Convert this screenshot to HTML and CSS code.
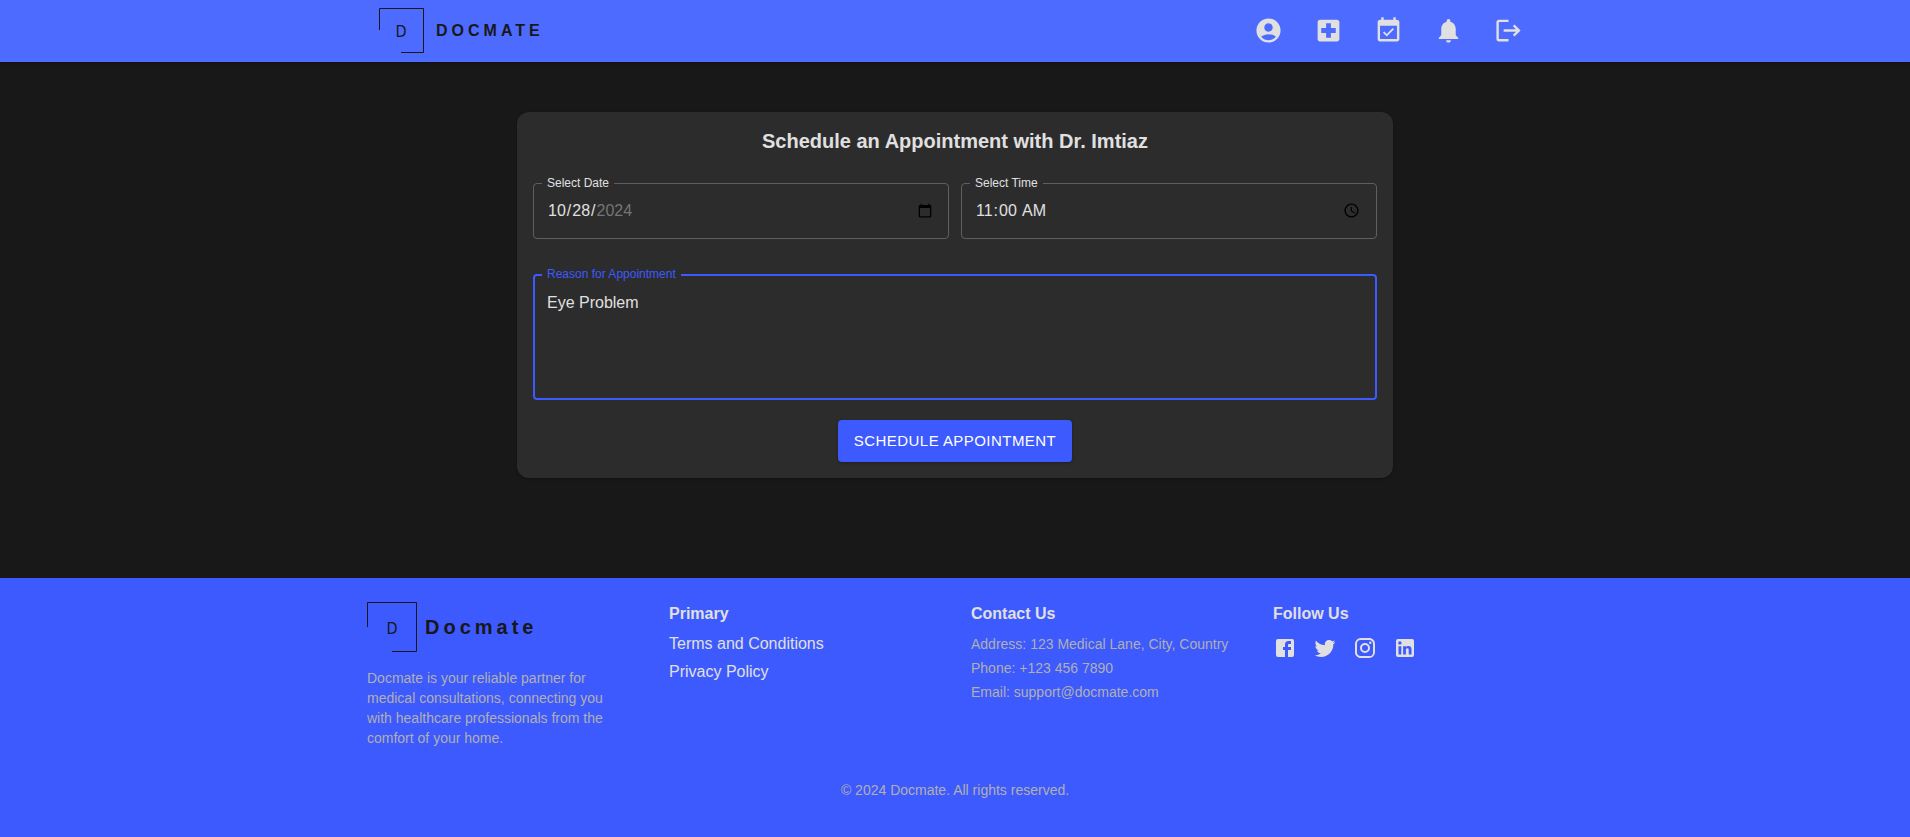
FILE: index.html
```html
<!DOCTYPE html>
<html lang="en">
<head>
<meta charset="utf-8">
<meta name="viewport" content="width=device-width, initial-scale=1">
<title>Docmate – Schedule an Appointment</title>
<link rel="stylesheet" href="styles.css">
</head>
<body>
<header class="topbar">
  <div class="container topbar-inner">
    <a class="brand" href="#home">
      <svg class="brand-mark" viewBox="0 0 45 45" aria-hidden="true"><path d="M.5 22V.5H44.5V44.5H22" fill="none" stroke="currentColor"/><text class="brand-letter" x="22" y="29" text-anchor="middle">D</text></svg>
      <span class="brand-name">DOCMATE</span>
    </a>
    <nav class="actions" aria-label="Main">
      <a class="action" href="#profile" aria-label="Profile"><svg viewBox="0 0 24 24"><path d="M12 2C6.48 2 2 6.48 2 12s4.480 10 10 10 10-4.480 10-10S17.520 2 12 2zm0 4c1.930 0 3.500 1.570 3.500 3.500S13.930 13 12 13s-3.500-1.570-3.500-3.500S10.070 6 12 6zm0 14c-2.030 0-4.430-.820-6.140-2.880C7.550 15.800 9.680 15 12 15s4.450.800 6.140 2.120C16.430 19.180 14.030 20 12 20z"/></svg></a>
      <a class="action" href="#doctors" aria-label="Doctors"><svg viewBox="0 0 24 24"><path d="M19 3H5c-1.100 0-1.990.900-1.990 2L3 19c0 1.100.900 2 2 2h14c1.100 0 2-.900 2-2V5c0-1.100-.900-2-2-2zm-1 11h-4v4h-4v-4H6v-4h4V6h4v4h4v4z"/></svg></a>
      <a class="action" href="#appointments" aria-label="Appointments"><svg viewBox="0 0 24 24"><path d="M16.530 11.060L15.470 10l-4.880 4.880-2.120-2.120-1.060 1.060L10.590 17l5.940-5.940zM19 3h-1V1h-2v2H8V1H6v2H5c-1.110 0-1.990.900-1.990 2L3 19c0 1.100.890 2 2 2h14c1.100 0 2-.900 2-2V5c0-1.100-.900-2-2-2zm0 16H5V8h14v11z"/></svg></a>
      <a class="action" href="#notifications" aria-label="Notifications"><svg viewBox="0 0 24 24"><path d="M12 22c1.100 0 2-.900 2-2h-4c0 1.100.890 2 2 2zm6-6v-5c0-3.070-1.640-5.640-4.500-6.320V4c0-.830-.670-1.500-1.500-1.500s-1.500.670-1.500 1.500v.680C7.630 5.360 6 7.920 6 11v5l-2 2v1h16v-1l-2-2z"/></svg></a>
      <a class="action" href="#logout" aria-label="Log out"><svg viewBox="0 0 24 24"><path d="M17 7l-1.410 1.410L18.170 11H8v2h10.170l-2.580 2.580L17 17l5-5zM4 5h8V3H4c-1.100 0-2 .900-2 2v14c0 1.100.900 2 2 2h8v-2H4V5z"/></svg></a>
    </nav>
  </div>
</header>

<main class="main">
  <form class="card">
    <h1 class="card-title">Schedule an Appointment with Dr. Imtiaz</h1>
    <div class="field-row">
      <div class="field">
        <label class="field-label" for="date">Select Date</label>
        <input class="field-input date-input" id="date" type="date" value="2024-10-28">
      </div>
      <div class="field">
        <label class="field-label" for="time">Select Time</label>
        <input class="field-input" id="time" type="time" value="11:00">
      </div>
    </div>
    <div class="field field-active">
      <label class="field-label" for="reason">Reason for Appointment</label>
      <textarea class="field-input reason-input" id="reason" rows="4">Eye Problem</textarea>
    </div>
    <button class="submit" type="submit">SCHEDULE APPOINTMENT</button>
  </form>
</main>

<footer class="footer">
  <div class="footer-grid">
    <section>
      <a class="brand footer-brand" href="#home">
        <svg class="brand-mark" viewBox="0 0 50 50" aria-hidden="true"><path d="M.5 25V.5H49.500V49.500H25" fill="none" stroke="currentColor"/><text class="brand-letter" x="25" y="32" text-anchor="middle">D</text></svg>
        <span class="brand-name">Docmate</span>
      </a>
      <p class="about">Docmate is your reliable partner for medical consultations, connecting you with healthcare professionals from the comfort of your home.</p>
    </section>
    <section>
      <h2 class="footer-title">Primary</h2>
      <ul class="links">
        <li><a href="#terms">Terms and Conditions</a></li>
        <li><a href="#privacy">Privacy Policy</a></li>
      </ul>
    </section>
    <section>
      <h2 class="footer-title">Contact Us</h2>
      <address class="contact">
        <p>Address: 123 Medical Lane, City, Country</p>
        <p>Phone: +123 456 7890</p>
        <p>Email: support@docmate.com</p>
      </address>
    </section>
    <section>
      <h2 class="footer-title">Follow Us</h2>
      <div class="social">
        <a href="#facebook" aria-label="Facebook"><svg viewBox="0 0 24 24"><path d="M5 3h14a2 2 0 0 1 2 2v14a2 2 0 0 1-2 2H5a2 2 0 0 1-2-2V5a2 2 0 0 1 2-2m13 2h-2.500A3.500 3.500 0 0 0 12 8.500V11h-2v3h2v7h3v-7h3v-3h-3V9a1 1 0 0 1 1-1h2V5z"/></svg></a>
        <a href="#twitter" aria-label="Twitter"><svg viewBox="0 0 24 24"><path d="M22.460 6c-.770.350-1.600.580-2.460.690.880-.530 1.560-1.370 1.880-2.380-.830.500-1.750.850-2.720 1.050C18.370 4.500 17.260 4 16 4c-2.350 0-4.270 1.920-4.270 4.290 0 .340.040.670.110.980C8.280 9.090 5.110 7.380 3 4.790c-.370.630-.580 1.370-.580 2.150 0 1.490.750 2.810 1.910 3.560-.710 0-1.370-.200-1.950-.500v.030c0 2.080 1.480 3.820 3.440 4.210a4.220 4.220 0 0 1-1.930.070 4.280 4.280 0 0 0 4 2.980 8.521 8.521 0 0 1-5.330 1.840c-.340 0-.680-.020-1.020-.060C3.440 20.290 5.700 21 8.120 21 16 21 20.330 14.460 20.330 8.790c0-.190 0-.370-.010-.560.840-.600 1.560-1.360 2.140-2.230z"/></svg></a>
        <a href="#instagram" aria-label="Instagram"><svg viewBox="0 0 24 24"><path d="M7.800 2h8.400C19.400 2 22 4.600 22 7.800v8.400a5.800 5.800 0 0 1-5.800 5.800H7.800C4.600 22 2 19.400 2 16.200V7.800A5.800 5.800 0 0 1 7.800 2m-.200 2A3.600 3.600 0 0 0 4 7.600v8.800C4 18.390 5.610 20 7.600 20h8.800a3.600 3.600 0 0 0 3.600-3.600V7.600C20 5.610 18.390 4 16.400 4H7.600m9.650 1.500a1.250 1.250 0 0 1 1.250 1.250A1.250 1.250 0 0 1 17.250 8 1.250 1.250 0 0 1 16 6.750a1.250 1.250 0 0 1 1.250-1.250M12 7a5 5 0 0 1 5 5 5 5 0 0 1-5 5 5 5 0 0 1-5-5 5 5 0 0 1 5-5m0 2a3 3 0 0 0-3 3 3 3 0 0 0 3 3 3 3 0 0 0 3-3 3 3 0 0 0-3-3z"/></svg></a>
        <a href="#linkedin" aria-label="LinkedIn"><svg viewBox="0 0 24 24"><path d="M19 3a2 2 0 0 1 2 2v14a2 2 0 0 1-2 2H5a2 2 0 0 1-2-2V5a2 2 0 0 1 2-2h14m-.500 15.500v-5.300a3.260 3.260 0 0 0-3.260-3.260c-.850 0-1.840.520-2.320 1.300v-1.110h-2.790v8.370h2.790v-4.930c0-.770.620-1.400 1.390-1.400a1.400 1.400 0 0 1 1.400 1.400v4.930h2.790M6.880 8.560a1.680 1.680 0 0 0 1.680-1.680c0-.930-.750-1.690-1.680-1.690a1.690 1.690 0 0 0-1.690 1.690c0 .930.760 1.680 1.690 1.680m1.390 9.940v-8.370H5.500v8.370h2.770z"/></svg></a>
      </div>
    </section>
  </div>
  <p class="copyright">© 2024 Docmate. All rights reserved.</p>
</footer>
</body>
</html>
```
FILE: styles.css
```css
* {
  box-sizing: border-box;
  margin: 0;
}

body {
  display: flex;
  flex-direction: column;
  min-height: 100vh;
  background: #181818;
  color: #e0e0e0;
  font-family: "Liberation Sans", Arial, sans-serif;
  font-size: 16px;
  line-height: 24px;
}

a {
  color: inherit;
  text-decoration: none;
}

svg {
  display: block;
  fill: currentColor;
}

/* Top bar */
.topbar {
  background: #4d6bff;
  box-shadow: 0 2px 4px rgba(0, 0, 0, 0.3);
}

.container {
  max-width: 1200px;
  margin: 0 auto;
  padding: 8px 24px 9px;
}

.topbar-inner {
  display: flex;
  align-items: center;
  justify-content: space-between;
}

.brand {
  display: flex;
  align-items: center;
  gap: 12px;
  color: #181818;
  font-weight: bold;
  letter-spacing: 4px;
}

.brand-mark {
  width: 45px;
  height: 45px;
}

.brand-letter {
  font-family: "DejaVu Sans Condensed", sans-serif;
  font-size: 16px;
  font-weight: normal;
  letter-spacing: 0;
}

.actions {
  display: flex;
  gap: 15px;
}

.action {
  padding: 8px;
}

.action svg {
  width: 29px;
  height: 29px;
}

/* Appointment form */
.main {
  padding: 50px 24px 100px;
}

.card {
  display: flex;
  flex-direction: column;
  max-width: 876px;
  margin: 0 auto;
  padding: 16px;
  border-radius: 12px;
  background: #2c2c2c;
  box-shadow: 0 1px 3px rgba(0, 0, 0, 0.3);
}

.card-title {
  margin-bottom: 29px;
  font-size: 20px;
  line-height: 26px;
  text-align: center;
}

.field-row {
  display: grid;
  grid-template-columns: 1fr 1fr;
  gap: 12px;
  margin-bottom: 35px;
}

.field {
  position: relative;
}

.field-label {
  position: absolute;
  top: -8px;
  left: 9px;
  padding: 0 5px;
  background: #2c2c2c;
  font-size: 12px;
  line-height: 16px;
}

.field-input {
  display: block;
  width: 100%;
  height: 56px;
  padding: 13px 13px 14px;
  border: 1px solid #5f5f5f;
  border-radius: 4px;
  outline: 0;
  background: transparent;
  color: inherit;
  font: inherit;
}

.date-input::-webkit-datetime-edit-year-field {
  color: #757575;
}

.field-active .field-label {
  color: #3d5afe;
}

.reason-input {
  height: auto;
  padding: 15px 12px;
  border: 2px solid #3d5afe;
  line-height: 23px;
  resize: none;
}

.submit {
  align-self: center;
  margin-top: 20px;
  padding: 8px 16px;
  border: 0;
  border-radius: 4px;
  background: #3d5afe;
  box-shadow: 0 1px 3px rgba(0, 0, 0, 0.3);
  color: #fff;
  font-family: inherit;
  font-size: 15px;
  line-height: 26px;
  letter-spacing: 0.03em;
}

/* Footer */
.footer {
  flex: 1;
  padding: 24px 0;
  background: #3d5afe;
}

.footer-grid {
  display: grid;
  grid-template-columns: repeat(4, 1fr);
  gap: 32px;
  max-width: 1200px;
  margin: 0 auto;
  padding: 0 12px;
}

.footer-brand {
  gap: 8px;
  margin-bottom: 16px;
  font-size: 20px;
}

.footer-brand .brand-mark {
  width: 50px;
  height: 50px;
}

.about,
.contact,
.copyright {
  color: #b0b0b0;
  font-size: 14px;
  font-style: normal;
}

.about {
  max-width: 250px;
  line-height: 20px;
}

.footer-title {
  margin-bottom: 6px;
  font-size: 16px;
}

.links {
  display: grid;
  gap: 4px;
  padding: 0;
  list-style: none;
}

.contact {
  line-height: 24px;
}

.social {
  display: flex;
  gap: 16px;
  padding-top: 4px;
}

.social svg {
  width: 24px;
  height: 24px;
}

.copyright {
  margin-top: 32px;
  line-height: 20px;
  text-align: center;
}
```
